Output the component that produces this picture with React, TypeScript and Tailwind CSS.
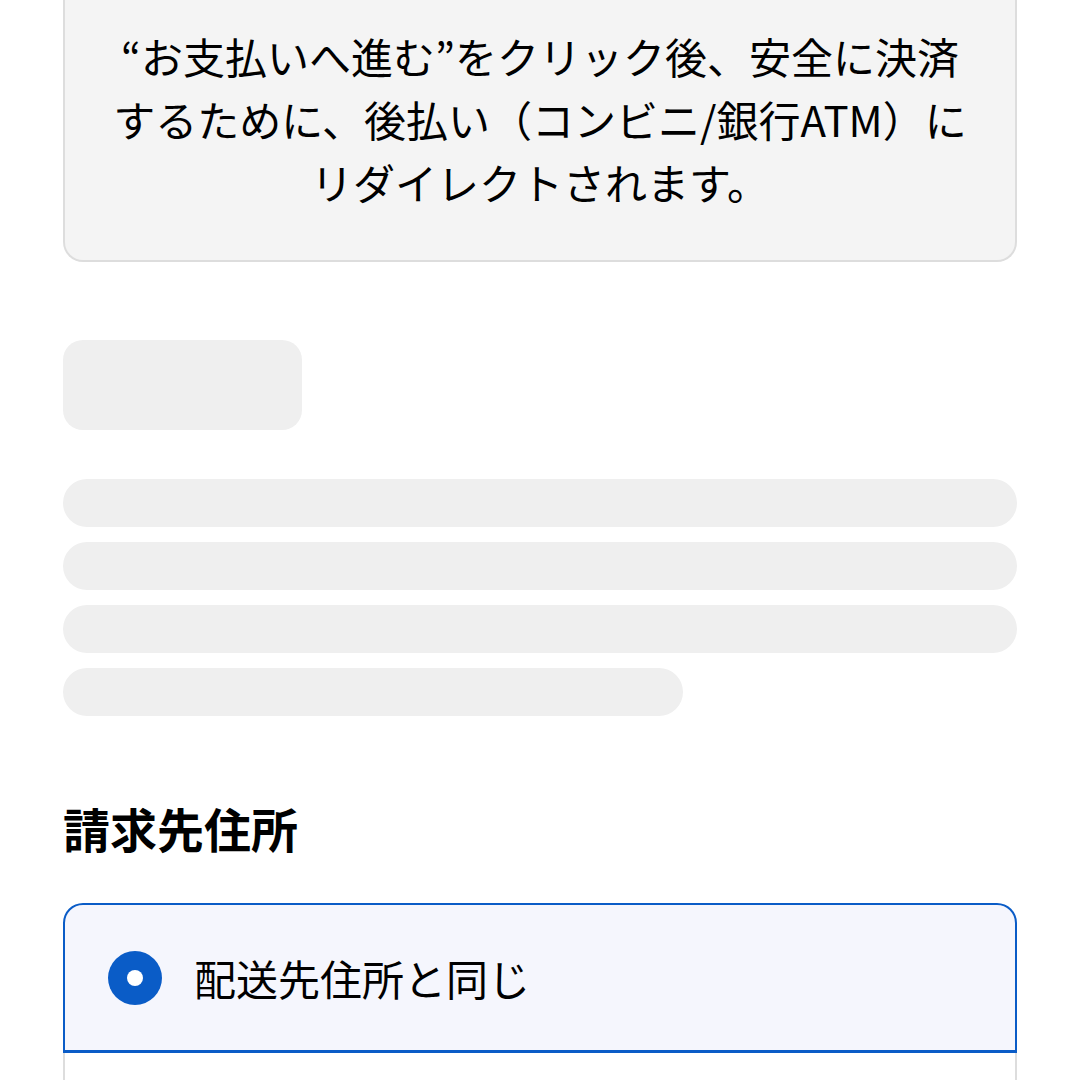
export default function App() {
  const bars = ["w-full", "w-full", "w-full", "w-[620px]"];
  return (
    <div
      className="min-h-[1080px] w-[1080px] overflow-hidden bg-white px-[63px] text-black"
      style={{ fontFamily: '"Noto Sans CJK JP", "Noto Sans", sans-serif' }}
    >
      {/* redirect notice */}
      <div className="rounded-b-[20px] border-2 border-t-0 border-[#dddddd] bg-[#f4f4f4] px-6 pb-[47px] pt-[24px] text-center text-[42px] leading-[63px]">
        <p>“お支払いへ進む”をクリック後、安全に決済</p>
        <p>するために、後払い（コンビニ/銀行ATM）に</p>
        <p>リダイレクトされます。</p>
      </div>

      {/* loading skeleton */}
      <div className="mt-[78px] h-[90px] w-[239px] rounded-[20px] bg-[#efefef]" />
      <div className="mt-[49px] flex flex-col gap-[15px]">
        {bars.map((w, i) => (
          <div key={i} className={`h-[48px] rounded-full bg-[#efefef] ${w}`} />
        ))}
      </div>

      <h2 className="mt-[82px] text-[47px] font-bold leading-[60px]">請求先住所</h2>

      {/* billing address options */}
      <div className="mt-[45px]">
        <label className="flex h-[150px] items-center gap-[32px] rounded-t-[20px] border-2 border-b-[3px] border-[#0a5cc7] bg-[#f5f6fd] px-[43px]">
          <span className="flex h-[54px] w-[54px] items-center justify-center rounded-full bg-[#0a5cc7]">
            <span className="h-[16px] w-[16px] rounded-full bg-white" />
          </span>
          <span className="text-[42px] leading-none">配送先住所と同じ</span>
        </label>
        <div className="h-[100px] border-2 border-t-0 border-[#dddddd]" />
      </div>
    </div>
  );
}
